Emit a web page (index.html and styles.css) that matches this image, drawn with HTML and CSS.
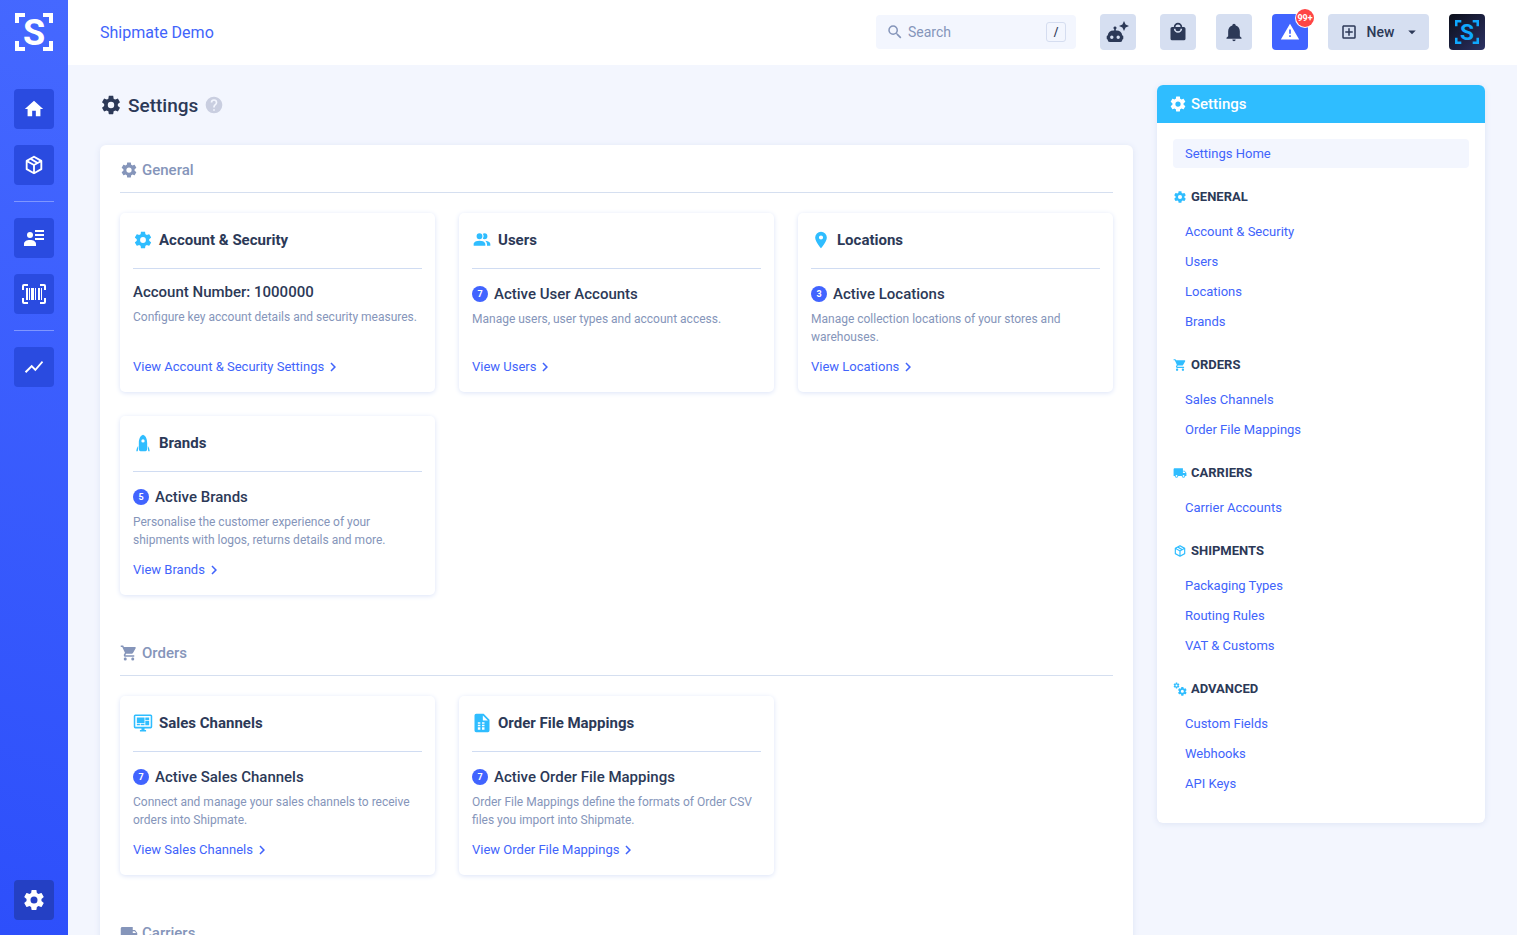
FILE: index.html
```html
<!DOCTYPE html>
<html lang="en">
<head>
    <meta charset="UTF-8">
    <title>Settings</title>
    <link rel="stylesheet" href="styles.css">
</head>
<body>
    <!-- icon sprite -->
    <svg class="sprite" xmlns="http://www.w3.org/2000/svg">
        <symbol id="cog" viewBox="0 0 24 24"><path d="M12,15.5A3.5,3.5 0 0,1 8.5,12A3.5,3.5 0 0,1 12,8.5A3.5,3.5 0 0,1 15.5,12A3.5,3.5 0 0,1 12,15.5M19.43,12.97C19.47,12.65 19.5,12.33 19.5,12C19.5,11.67 19.47,11.34 19.43,11L21.54,9.37C21.73,9.22 21.78,8.95 21.66,8.73L19.66,5.27C19.54,5.05 19.27,4.96 19.05,5.05L16.56,6.05C16.04,5.66 15.5,5.32 14.87,5.07L14.5,2.42C14.46,2.18 14.25,2 14,2H10C9.75,2 9.54,2.18 9.5,2.42L9.13,5.07C8.5,5.32 7.96,5.66 7.44,6.05L4.95,5.05C4.73,4.96 4.46,5.05 4.34,5.27L2.34,8.73C2.21,8.95 2.27,9.22 2.46,9.37L4.57,11C4.53,11.34 4.5,11.67 4.5,12C4.5,12.33 4.53,12.65 4.57,12.97L2.46,14.63C2.27,14.78 2.21,15.05 2.34,15.27L4.34,18.73C4.46,18.95 4.73,19.03 4.95,18.95L7.44,17.94C7.96,18.34 8.5,18.68 9.13,18.93L9.5,21.58C9.54,21.82 9.75,22 10,22H14C14.25,22 14.46,21.82 14.5,21.58L14.87,18.93C15.5,18.67 16.04,18.34 16.56,17.94L19.05,18.95C19.27,19.03 19.54,18.95 19.66,18.73L21.66,15.27C21.78,15.05 21.73,14.78 21.54,14.63L19.43,12.97Z"/></symbol>
        <symbol id="home" viewBox="0 0 24 24"><path d="M10,20V14H14V20H19V12H22L12,3L2,12H5V20H10Z"/></symbol>
        <symbol id="package" viewBox="0 0 24 24"><path d="M21,16.5C21,16.88 20.79,17.21 20.47,17.38L12.57,21.82C12.41,21.94 12.21,22 12,22C11.79,22 11.59,21.94 11.43,21.82L3.53,17.38C3.21,17.21 3,16.88 3,16.5V7.5C3,7.12 3.21,6.79 3.53,6.62L11.43,2.18C11.59,2.06 11.79,2 12,2C12.21,2 12.41,2.06 12.57,2.18L20.47,6.62C20.79,6.79 21,7.12 21,7.5V16.5M12,4.15L10.11,5.22L16,8.61L17.96,7.5L12,4.15M6.04,7.5L12,10.85L13.96,9.75L8.08,6.35L6.04,7.5M5,15.91L11,19.29V12.58L5,9.21V15.91M19,15.91V9.21L13,12.58V19.29L19,15.91Z"/></symbol>
        <symbol id="contact" viewBox="0 0 24 24"><circle cx="8" cy="9" r="3"/><path d="M2,20V18C2,15.5 4.5,14 8,14S14,15.5 14,18V20ZM13,4H22V6H13ZM13,8H22V10H13ZM13,12H22V14H13Z"/></symbol>
        <symbol id="barcode" viewBox="0 0 24 24"><path d="M4,6H6V18H4ZM7,6H8V18H7ZM9,6H12V18H9ZM13,6H14V18H13ZM16,6H18V18H16ZM19,6H20V18H19ZM2,4V8H0V4A2,2 0 0,1 2,2H6V4ZM22,2A2,2 0 0,1 24,4V8H22V4H18V2ZM2,16V20H6V22H2A2,2 0 0,1 0,20V16ZM22,20V16H24V20A2,2 0 0,1 22,22H18V20Z"/></symbol>
        <symbol id="chart" viewBox="0 0 24 24"><path d="M3.5,18.5L9.5,12.5L13.5,16.5L22,6.92L20.59,5.5L13.5,13.5L9.5,9.5L2,17Z"/></symbol>
        <symbol id="magnify" viewBox="0 0 24 24"><path d="M9.5,3A6.5,6.5 0 0,1 16,9.5C16,11.11 15.41,12.59 14.44,13.73L14.71,14H15.5L20.5,19L19,20.5L14,15.5V14.71L13.73,14.44C12.59,15.41 11.11,16 9.5,16A6.5,6.5 0 0,1 3,9.5A6.5,6.5 0 0,1 9.5,3M9.5,5C7,5 5,7 5,9.5C5,12 7,14 9.5,14C12,14 14,12 14,9.5C14,7 12,5 9.5,5Z"/></symbol>
        <symbol id="robot" viewBox="0 0 24 24"><path fill-rule="evenodd" d="M9,6.5A1.5,1.5 0 0,1 9.8,9.3V10.5H10.5A6,6 0 0,1 16.3,15.5H16.5A1,1 0 0,1 17.3,16.5V18.5A1,1 0 0,1 16.3,19.5V20A2,2 0 0,1 14.3,22H3.7A2,2 0 0,1 1.7,20V19.5A1,1 0 0,1 0.7,18.5V16.5A1,1 0 0,1 1.7,15.5A6,6 0 0,1 7.5,10.5H8.2V9.3A1.5,1.5 0 0,1 9,6.5M5.8,15.5A1.7,1.7 0 1,0 5.8,18.9A1.7,1.7 0 1,0 5.8,15.5M12.2,15.5A1.7,1.7 0 1,0 12.2,18.9A1.7,1.7 0 1,0 12.2,15.5M18,1L19.6,4.4L23,6L19.6,7.6L18,11L16.4,7.6L13,6L16.4,4.4Z"/></symbol>
        <symbol id="bag" viewBox="0 0 24 24"><path d="M12,13A5,5 0 0,1 7,8H9A3,3 0 0,0 12,11A3,3 0 0,0 15,8H17A5,5 0 0,1 12,13M12,3A3,3 0 0,1 15,6H9A3,3 0 0,1 12,3M19,6H17A5,5 0 0,0 12,1A5,5 0 0,0 7,6H5C3.89,6 3,6.89 3,8V20A2,2 0 0,0 5,22H19A2,2 0 0,0 21,20V8C21,6.89 20.1,6 19,6Z"/></symbol>
        <symbol id="bell" viewBox="0 0 24 24"><path d="M21,19V20H3V19L5,17V11C5,7.9 7.03,5.17 10,4.29C10,4.19 10,4.1 10,4A2,2 0 0,1 12,2A2,2 0 0,1 14,4C14,4.1 14,4.19 14,4.29C16.97,5.17 19,7.9 19,11V17L21,19M14,21A2,2 0 0,1 12,23A2,2 0 0,1 10,21"/></symbol>
        <symbol id="alert" viewBox="0 0 24 24"><path d="M13 14H11V9H13M13 18H11V16H13M1 21H23L12 2L1 21Z"/></symbol>
        <symbol id="plus-box" viewBox="0 0 24 24"><path d="M19,19V5H5V19H19M19,3A2,2 0 0,1 21,5V19A2,2 0 0,1 19,21H5A2,2 0 0,1 3,19V5C3,3.89 3.9,3 5,3H19M11,7H13V11H17V13H13V17H11V13H7V11H11V7Z"/></symbol>
        <symbol id="caret" viewBox="0 0 24 24"><path d="M7,10L12,15L17,10H7Z"/></symbol>
        <symbol id="users" viewBox="0 0 24 24"><path d="M16 17V19H2V17S2 13 9 13 16 17 16 17M12.5 7.5A3.5 3.5 0 1 0 9 11A3.5 3.5 0 0 0 12.5 7.5M15.94 13A5.32 5.32 0 0 1 18 17V19H22V17S22 13.37 15.94 13M15 4A3.39 3.39 0 0 0 13.07 4.59A5 5 0 0 1 13.07 10.41A3.39 3.39 0 0 0 15 11A3.5 3.5 0 0 0 15 4Z"/></symbol>
        <symbol id="marker" viewBox="0 0 24 24"><path d="M12,11.5A2.5,2.5 0 0,1 9.5,9A2.5,2.5 0 0,1 12,6.5A2.5,2.5 0 0,1 14.5,9A2.5,2.5 0 0,1 12,11.5M12,2A7,7 0 0,0 5,9C5,14.25 12,22 12,22C12,22 19,14.25 19,9A7,7 0 0,0 12,2Z"/></symbol>
        <symbol id="rocket" viewBox="0 0 24 24"><path fill-rule="evenodd" d="M12,2C9,2.8 7,7 7,12V19C7,21 8,22 9,22H15C16,22 17,21 17,19V12C17,7 15,2.8 12,2M12,7.5A2,2 0 1,1 12,11.5A2,2 0 1,1 12,7.5M6.2,15.5C6.2,19 6,20.5 5.6,22H4C4,19.5 4.8,17.2 6.2,15.5M17.8,15.5C17.8,19 18,20.5 18.4,22H20C20,19.5 19.2,17.2 17.8,15.5"/></symbol>
        <symbol id="cart" viewBox="0 0 24 24"><path d="M17,18C15.89,18 15,18.89 15,20A2,2 0 0,0 17,22A2,2 0 0,0 19,20C19,18.89 18.1,18 17,18M1,2V4H3L6.6,11.59L5.24,14.04C5.09,14.32 5,14.65 5,15A2,2 0 0,0 7,17H19V15H7.42A0.25,0.25 0 0,1 7.17,14.75C7.17,14.7 7.18,14.66 7.2,14.63L8.1,13H15.55C16.3,13 16.96,12.58 17.3,11.97L20.88,5.5C20.95,5.34 21,5.17 21,5A1,1 0 0,0 20,4H5.21L4.27,2M7,18C5.89,18 5,18.89 5,20A2,2 0 0,0 7,22A2,2 0 0,0 9,20C9,18.89 8.1,18 7,18Z"/></symbol>
        <symbol id="truck" viewBox="0 0 24 24"><path d="M18,18.5A1.5,1.5 0 0,1 16.5,17A1.5,1.5 0 0,1 18,15.5A1.5,1.5 0 0,1 19.5,17A1.5,1.5 0 0,1 18,18.5M19.5,9.5L21.46,12H17V9.5M6,18.5A1.5,1.5 0 0,1 4.5,17A1.5,1.5 0 0,1 6,15.5A1.5,1.5 0 0,1 7.5,17A1.5,1.5 0 0,1 6,18.5M20,8H17V4H3C1.89,4 1,4.89 1,6V17H3A3,3 0 0,0 6,20A3,3 0 0,0 9,17H15A3,3 0 0,0 18,20A3,3 0 0,0 21,17H23V12L20,8Z"/></symbol>
        <symbol id="monitor" viewBox="-1 0 26 24"><path fill-rule="evenodd" d="M2,1H22A2,2 0 0,1 24,3V17A2,2 0 0,1 22,19H14V21H16V23H8V21H10V19H2A2,2 0 0,1 0,17V3A2,2 0 0,1 2,1M2,3V17H22V3ZM4,5H14V12H4ZM15,5H20V8H15ZM15,9H20V15H15ZM4,13H8V15H4ZM9,13H14V15H9Z"/></symbol>
        <symbol id="file-table" viewBox="0 0 24 24"><path fill-rule="evenodd" d="M5,1H14L21,8V21A2,2 0 0,1 19,23H5A2,2 0 0,1 3,21V3A2,2 0 0,1 5,1M13,3V9H19ZM7,11V13H10V11ZM12,11V13H15V11ZM7,14V16H10V14ZM12,14V16H15V14ZM7,17V20H10V17ZM12,17V20H15V17Z"/></symbol>
        <symbol id="cogs" viewBox="0 0 24 24"><use href="#cog" x="0" y="0" width="12" height="12"/><use href="#cog" x="7" y="7" width="18" height="18"/></symbol>
        <symbol id="help" viewBox="0 0 24 24"><path d="M15.07,11.25L14.17,12.17C13.45,12.89 13,13.5 13,15H11V14.5C11,13.39 11.45,12.39 12.17,11.67L13.41,10.41C13.78,10.05 14,9.55 14,9C14,7.89 13.1,7 12,7A2,2 0 0,0 10,9H8A4,4 0 0,1 12,5A4,4 0 0,1 16,9C16,9.88 15.64,10.67 15.07,11.25M13,19H11V17H13M12,2A10,10 0 0,0 2,12A10,10 0 0,0 12,22A10,10 0 0,0 22,12C22,6.47 17.5,2 12,2Z"/></symbol>
        <symbol id="chevron" viewBox="0 0 24 24"><path d="M8.59,16.58L13.17,12L8.59,7.41L10,6L16,12L10,18L8.59,16.58Z"/></symbol>
    </svg>

    <div class="app">
        <nav class="sidebar">
            <a href="#" class="logo">
                <svg viewBox="0 0 38 38"><path d="M0,0H10V4H4V10H0ZM28,0H38V10H34V4H28ZM0,28H4V34H10V38H0ZM34,28H38V38H28V34H34Z"/><text x="19" y="32" text-anchor="middle" class="logo-letter">S</text></svg>
            </a>
            <a href="#" class="nav-btn"><svg class="icon-xl"><use href="#home"/></svg></a>
            <a href="#" class="nav-btn"><svg class="icon-xl"><use href="#package"/></svg></a>
            <hr>
            <a href="#" class="nav-btn"><svg class="icon-lg"><use href="#contact"/></svg></a>
            <a href="#" class="nav-btn"><svg class="icon-lg"><use href="#barcode"/></svg></a>
            <hr>
            <a href="#" class="nav-btn"><svg class="icon-xl"><use href="#chart"/></svg></a>
            <a href="#" class="nav-btn bottom"><svg class="icon-lg"><use href="#cog"/></svg></a>
        </nav>

        <div class="page">
            <header class="topbar">
                <a href="#" class="account-name">Shipmate Demo</a>
                <label class="search">
                    <svg class="icon-sm"><use href="#magnify"/></svg>
                    <input type="text" placeholder="Search" aria-label="Search">
                    <kbd>/</kbd>
                </label>
                <button class="top-btn assistant"><svg class="icon-lg"><use href="#robot"/></svg></button>
                <button class="top-btn"><svg class="icon-md"><use href="#bag"/></svg></button>
                <button class="top-btn"><svg class="icon-md"><use href="#bell"/></svg></button>
                <button class="top-btn alerts"><svg class="icon-md"><use href="#alert"/></svg><span class="alert-count">99+</span></button>
                <button class="top-btn new"><svg class="icon-sm"><use href="#plus-box"/></svg>New<svg class="icon-sm"><use href="#caret"/></svg></button>
                <a href="#" class="avatar">
                    <svg viewBox="0 0 38 38"><path d="M0,0H10V4H4V10H0ZM28,0H38V10H34V4H28ZM0,28H4V34H10V38H0ZM34,28H38V38H28V34H34Z"/><text x="19" y="32" text-anchor="middle" class="logo-letter">S</text></svg>
                </a>
            </header>

            <div class="content">
                <main>
                    <h1><svg class="icon-xl"><use href="#cog"/></svg>Settings<svg class="icon-md help"><use href="#help"/></svg></h1>
                    <div class="panel">
                        <section>
                            <h2><svg class="icon-sm"><use href="#cog"/></svg>General</h2>
                            <div class="cards">
                                <article class="card">
                                    <h3><svg class="icon-md"><use href="#cog"/></svg>Account &amp; Security</h3>
                                    <h4>Account Number: 1000000</h4>
                                    <p>Configure key account details and security measures.</p>
                                    <a href="#">View Account &amp; Security Settings<svg class="icon-sm"><use href="#chevron"/></svg></a>
                                </article>
                                <article class="card">
                                    <h3><svg class="icon-md"><use href="#users"/></svg>Users</h3>
                                    <h4 class="counted"><span class="count">7</span>Active User Accounts</h4>
                                    <p>Manage users, user types and account access.</p>
                                    <a href="#">View Users<svg class="icon-sm"><use href="#chevron"/></svg></a>
                                </article>
                                <article class="card">
                                    <h3><svg class="icon-md"><use href="#marker"/></svg>Locations</h3>
                                    <h4 class="counted"><span class="count">3</span>Active Locations</h4>
                                    <p>Manage collection locations of your stores and warehouses.</p>
                                    <a href="#">View Locations<svg class="icon-sm"><use href="#chevron"/></svg></a>
                                </article>
                                <article class="card">
                                    <h3><svg class="icon-md"><use href="#rocket"/></svg>Brands</h3>
                                    <h4 class="counted"><span class="count">5</span>Active Brands</h4>
                                    <p>Personalise the customer experience of your shipments with logos, returns details and more.</p>
                                    <a href="#">View Brands<svg class="icon-sm"><use href="#chevron"/></svg></a>
                                </article>
                            </div>
                        </section>
                        <section>
                            <h2><svg class="icon-sm"><use href="#cart"/></svg>Orders</h2>
                            <div class="cards">
                                <article class="card">
                                    <h3><svg class="icon-md"><use href="#monitor"/></svg>Sales Channels</h3>
                                    <h4 class="counted"><span class="count">7</span>Active Sales Channels</h4>
                                    <p>Connect and manage your sales channels to receive orders into Shipmate.</p>
                                    <a href="#">View Sales Channels<svg class="icon-sm"><use href="#chevron"/></svg></a>
                                </article>
                                <article class="card">
                                    <h3><svg class="icon-md"><use href="#file-table"/></svg>Order File Mappings</h3>
                                    <h4 class="counted"><span class="count">7</span>Active Order File Mappings</h4>
                                    <p>Order File Mappings define the formats of Order CSV files you import into Shipmate.</p>
                                    <a href="#">View Order File Mappings<svg class="icon-sm"><use href="#chevron"/></svg></a>
                                </article>
                            </div>
                        </section>
                        <section>
                            <h2><svg class="icon-sm"><use href="#truck"/></svg>Carriers</h2>
                        </section>
                    </div>
                </main>

                <aside class="menu">
                    <h2><svg class="icon-sm"><use href="#cog"/></svg>Settings</h2>
                    <div class="menu-body">
                        <a href="#" class="active">Settings Home</a>
                        <h3><svg class="icon-xs"><use href="#cog"/></svg>GENERAL</h3>
                        <a href="#">Account &amp; Security</a>
                        <a href="#">Users</a>
                        <a href="#">Locations</a>
                        <a href="#">Brands</a>
                        <h3><svg class="icon-xs"><use href="#cart"/></svg>ORDERS</h3>
                        <a href="#">Sales Channels</a>
                        <a href="#">Order File Mappings</a>
                        <h3><svg class="icon-xs"><use href="#truck"/></svg>CARRIERS</h3>
                        <a href="#">Carrier Accounts</a>
                        <h3><svg class="icon-xs"><use href="#package"/></svg>SHIPMENTS</h3>
                        <a href="#">Packaging Types</a>
                        <a href="#">Routing Rules</a>
                        <a href="#">VAT &amp; Customs</a>
                        <h3><svg class="icon-xs"><use href="#cogs"/></svg>ADVANCED</h3>
                        <a href="#">Custom Fields</a>
                        <a href="#">Webhooks</a>
                        <a href="#">API Keys</a>
                    </div>
                </aside>
            </div>
        </div>
    </div>
</body>
</html>
```
FILE: styles.css
```css
/* reset css */
* {
    box-sizing: border-box;
    margin: 0;
    padding: 0;
}
body {
    font-family: Roboto, "Liberation Sans", sans-serif;
    font-size: 13px;
    color: #2c3957;
    background: #f3f6fe;
}
a {
    color: #4164fb;
    text-decoration: none;
}
button {
    border: none;
    font-family: inherit;
    cursor: pointer;
}
svg {
    display: block;
    flex: none;
    fill: currentColor;
}
/* icons */
.sprite {
    position: absolute;
    width: 0;
    height: 0;
}
.icon-xs {
    width: 14px;
    height: 14px;
}
.icon-sm {
    width: 18px;
    height: 18px;
}
.icon-md {
    width: 20px;
    height: 20px;
}
.icon-xl {
    width: 22px;
    height: 22px;
}
.icon-lg {
    width: 24px;
    height: 24px;
}
.logo-letter {
    font-family: Roboto, "Liberation Sans", sans-serif;
    font-size: 36px;
    font-weight: 700;
}
/* layout */
.app {
    display: flex;
    height: 100vh;
}
.page {
    display: flex;
    flex: 1;
    flex-direction: column;
    min-width: 0;
}
/* sidebar */
.sidebar {
    display: flex;
    flex: none;
    flex-direction: column;
    align-items: center;
    gap: 16px;
    padding: 13px 14px 15px;
    width: 68px;
    background: linear-gradient(195deg, #4568ff, #2d4ffb);
}
.logo {
    margin-bottom: 22px;
    color: #fff;
}
.logo svg {
    width: 38px;
    height: 38px;
}
.nav-btn {
    display: flex;
    align-items: center;
    justify-content: center;
    width: 40px;
    height: 40px;
    border-radius: 4px;
    color: #fff;
    background: #2a4be0;
}
.nav-btn.bottom {
    margin-top: auto;
    background: #2440c4;
}
.sidebar hr {
    width: 40px;
    border: none;
    border-top: 1px solid #7f96ff;
}
/* top bar */
.topbar {
    display: flex;
    flex: none;
    align-items: center;
    gap: 20px;
    padding: 0 32px 1px;
    height: 65px;
    background: #fff;
}
.account-name {
    margin-right: auto;
    font-size: 16px;
}
.search {
    display: flex;
    align-items: center;
    gap: 4px;
    margin-right: 4px;
    padding: 0 10px;
    width: 200px;
    height: 34px;
    border-radius: 4px;
    color: #8595ba;
    background: #f3f6fe;
}
.search input {
    flex: 1;
    min-width: 0;
    border: none;
    outline: none;
    font-family: inherit;
    font-size: 14px;
    background: none;
}
.search input::placeholder {
    color: #8595ba;
}
.search kbd {
    width: 20px;
    height: 20px;
    border: 1px solid #d5ddf0;
    border-radius: 3px;
    font-family: inherit;
    font-size: 12px;
    font-weight: 500;
    line-height: 18px;
    text-align: center;
    color: #2c3957;
}
.top-btn {
    position: relative;
    display: flex;
    align-items: center;
    justify-content: center;
    width: 36px;
    height: 36px;
    border-radius: 4px;
    color: #2c3957;
    background: #d6dff1;
}
.assistant {
    margin-right: 4px;
}
.alerts {
    color: #fff;
    background: #4164ff;
}
.alert-count {
    position: absolute;
    top: -5px;
    right: -6px;
    width: 18px;
    height: 18px;
    border-radius: 50%;
    font-size: 9px;
    font-weight: 700;
    line-height: 18px;
    text-align: center;
    background: #ff4545;
    box-shadow: 0 0 0 1px #fff;
}
.new {
    justify-content: space-between;
    padding: 0 8px 0 12px;
    width: 101px;
    font-size: 14px;
    font-weight: 500;
}
.avatar {
    display: flex;
    align-items: center;
    justify-content: center;
    width: 36px;
    height: 36px;
    border-radius: 4px;
    color: #0fa8ff;
    background: linear-gradient(135deg, #0b0e1a, #2c3163);
}
.avatar svg {
    width: 24px;
    height: 24px;
}
/* content */
.content {
    display: flex;
    flex: 1;
    align-items: flex-start;
    gap: 24px;
    padding: 20px 32px;
    min-height: 0;
    overflow-y: auto;
    scrollbar-width: none;
}
main {
    flex: 1;
    min-width: 0;
}
h1 {
    display: flex;
    align-items: center;
    gap: 6px;
    margin-bottom: 20px;
    height: 40px;
    font-size: 19px;
    font-weight: 500;
}
.help {
    color: #c9cee0;
}
.panel {
    padding: 0 20px;
    border-radius: 6px;
    background: #fff;
    box-shadow: 0 1px 6px #dde4f5;
}
.panel section {
    padding-bottom: 33px;
}
.panel h2 {
    display: flex;
    align-items: center;
    gap: 4px;
    margin-bottom: 20px;
    padding-top: 2px;
    height: 48px;
    border-bottom: 1px solid #d5dff0;
    font-size: 15px;
    font-weight: 500;
    color: #8595ba;
}
.cards {
    display: grid;
    grid-template-columns: repeat(3, 1fr);
    gap: 24px;
}
.card {
    display: flex;
    flex-direction: column;
    padding: 0 13px 16px;
    border-radius: 5px;
    box-shadow: 0 1px 5px #dbe3f8;
}
.card h3 {
    display: flex;
    align-items: center;
    gap: 6px;
    margin-bottom: 11px;
    padding-bottom: 2px;
    height: 56px;
    border-bottom: 1px solid #d0dcf2;
    font-size: 15px;
    font-weight: 700;
}
.card h3 svg {
    color: #2fbdff;
}
.card h4 {
    display: flex;
    align-items: center;
    gap: 6px;
    margin-bottom: 4px;
    font-size: 15px;
    font-weight: 500;
    line-height: 24px;
}
.card .counted {
    padding-top: 2px;
}
.count {
    width: 16px;
    height: 16px;
    border-radius: 50%;
    font-size: 9px;
    font-weight: 700;
    line-height: 16px;
    text-align: center;
    color: #fff;
    background: #4164ff;
}
.card p {
    margin-bottom: 12px;
    font-size: 12px;
    line-height: 18px;
    color: #8595ba;
}
.card a {
    display: flex;
    align-items: center;
    margin-top: auto;
    line-height: 18px;
}
/* settings menu */
.menu {
    flex: none;
    width: 328px;
    border-radius: 6px;
    overflow: hidden;
    background: #fff;
    box-shadow: 0 1px 6px #dde4f5;
}
.menu h2 {
    display: flex;
    align-items: center;
    gap: 4px;
    padding: 0 12px;
    height: 38px;
    font-size: 15px;
    font-weight: 500;
    color: #fff;
    background: #2fbdff;
}
.menu-body {
    padding: 16px 16px 24px;
}
.menu-body a {
    display: block;
    margin-bottom: 1px;
    padding: 0 12px;
    border-radius: 4px;
    line-height: 29px;
}
.menu-body .active {
    background: #f3f6fe;
}
.menu-body h3 {
    display: flex;
    align-items: center;
    gap: 4px;
    margin: 19px 0 10px;
    font-size: 13px;
    font-weight: 700;
    line-height: 20px;
}
.menu-body h3 svg {
    color: #2fbdff;
}
```
